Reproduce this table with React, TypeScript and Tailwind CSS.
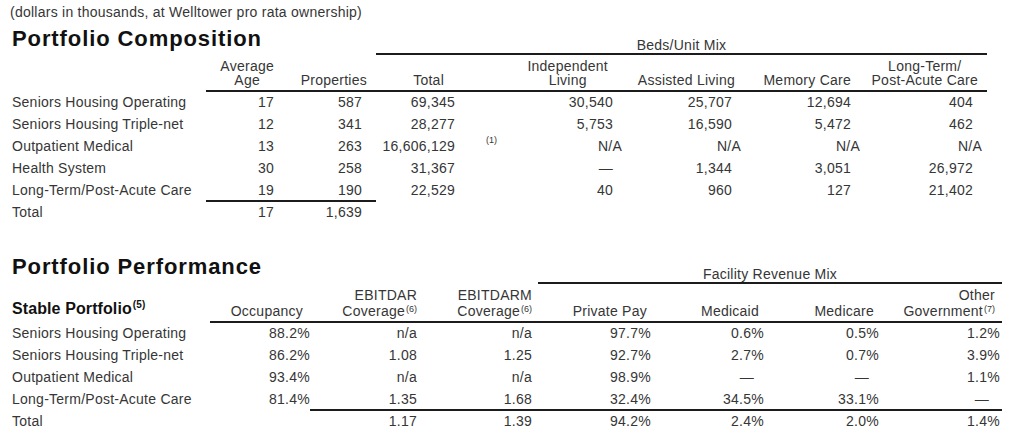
import React from "react";

const comp = [
  ["Seniors Housing Operating", "17", "587", "69,345", "30,540", "25,707", "12,694", "404"],
  ["Seniors Housing Triple-net", "12", "341", "28,277", "5,753", "16,590", "5,472", "462"],
  ["Outpatient Medical", "13", "263", "16,606,129", "N/A", "N/A", "N/A", "N/A"],
  ["Health System", "30", "258", "31,367", "—", "1,344", "3,051", "26,972"],
  ["Long-Term/Post-Acute Care", "19", "190", "22,529", "40", "960", "127", "21,402"],
];

const perf = [
  ["Seniors Housing Operating", "88.2%", "n/a", "n/a", "97.7%", "0.6%", "0.5%", "1.2%"],
  ["Seniors Housing Triple-net", "86.2%", "1.08", "1.25", "92.7%", "2.7%", "0.7%", "3.9%"],
  ["Outpatient Medical", "93.4%", "n/a", "n/a", "98.9%", "—", "—", "1.1%"],
  ["Long-Term/Post-Acute Care", "81.4%", "1.35", "1.68", "32.4%", "34.5%", "33.1%", "—"],
];

const perfPad = ["", "pr-0", "pr-[3px]", "pr-[6px]", "pr-[3px]", "pr-[3px]", "pr-[3px]", "pr-[2px]"];

function Sup({ n }: { n: number }) {
  return <span className="text-[9px] tracking-normal align-[4px] ml-px">({n})</span>;
}

function Composition() {
  return (
    <div className="grid grid-cols-[194px_82px_88px_93px_158px_119px_119px_122px]">
      <div className="col-span-3 pb-[3px] text-[22px] leading-[26px] font-bold tracking-[0.9px] text-[#111]">
        Portfolio Composition
      </div>
      <div className="col-span-5 self-end text-center leading-4 border-b-2 border-[#1c1c1c]">Beds/Unit Mix</div>

      <div />
      {[
        ["pr-[14px]", "Average", "Age"],
        ["pr-[9px]", "", "Properties"],
        ["pr-[25px]", "", "Total"],
        ["pr-[19px]", "Independent", "Living"],
        ["pr-[11px]", "", "Assisted Living"],
        ["pr-[14px]", "", "Memory Care"],
        ["pr-[9px]", "Long-Term/", "Post-Acute Care"],
      ].map(([pad, a, b]) => (
        <div key={b} className={`flex justify-end items-end pt-1 pb-[3px] border-b-2 border-[#1c1c1c] leading-[14px] ${pad}`}>
          <div className="text-center">
            {a && <div>{a}</div>}
            <div>{b}</div>
          </div>
        </div>
      ))}

      {comp.map((r, i) =>
        r.map((c, j) => {
          const last = i === comp.length - 1 && (j === 1 || j === 2);
          if (j === 0) return <div key={`${i}-${j}`} className="h-[22px] leading-5">{c}</div>;
          return (
            <div
              key={`${i}-${j}`}
              className={`relative h-[22px] leading-5 text-right ${c === "N/A" ? "pr-[5px]" : "pr-[14px]"} ${last ? "border-b-2 border-[#1c1c1c]" : ""}`}
            >
              {c}
              {c === "16,606,129" && (
                <span className="absolute left-[110px] top-[-1px] text-[9px] tracking-normal leading-[10px]">(1)</span>
              )}
            </div>
          );
        })
      )}
      <div className="h-[22px] leading-5">Total</div>
      <div className="h-[22px] leading-5 text-right pr-[14px]">17</div>
      <div className="h-[22px] leading-5 text-right pr-[14px]">1,639</div>
    </div>
  );
}

function Performance() {
  return (
    <div className="grid grid-cols-[198px_100px_110px_118px_116px_113px_115px_120px]">
      <div className="col-span-4 pb-1 text-[22px] leading-[26px] font-bold tracking-[0.9px] text-[#111]">
        Portfolio Performance
      </div>
      <div className="col-span-4 self-end text-center leading-4 border-b-2 border-[#1c1c1c]">Facility Revenue Mix</div>

      <div className="self-end pb-[5px] text-[16px] leading-[18px] font-bold tracking-[0.1px] text-[#111]">
        Stable Portfolio<span className="text-[10px] align-[6px] ml-px">(5)</span>
      </div>
      <div className="flex justify-end items-end pt-1 pb-[3px] pr-[7px] border-b-2 border-[#1c1c1c] leading-[14px]">Occupancy</div>
      <div className="flex justify-end items-end pt-1 pb-[3px] pr-[3px] border-b-2 border-[#1c1c1c] leading-[14px]">
        <div className="text-right">
          <div>EBITDAR</div>
          <div>
            Coverage<Sup n={6} />
          </div>
        </div>
      </div>
      <div className="flex justify-end items-end pt-1 pb-[3px] pr-[6px] border-b-2 border-[#1c1c1c] leading-[14px]">
        <div className="text-right">
          <div>EBITDARM</div>
          <div>
            Coverage<Sup n={6} />
          </div>
        </div>
      </div>
      <div className="flex justify-end items-end pt-1 pb-[3px] pr-[7px] border-b-2 border-[#1c1c1c] leading-[14px]">Private Pay</div>
      <div className="flex justify-end items-end pt-1 pb-[3px] pr-[8px] border-b-2 border-[#1c1c1c] leading-[14px]">Medicaid</div>
      <div className="flex justify-end items-end pt-1 pb-[3px] pr-[8px] border-b-2 border-[#1c1c1c] leading-[14px]">Medicare</div>
      <div className="flex justify-end items-end pt-1 pb-[3px] pr-[7px] border-b-2 border-[#1c1c1c] leading-[14px]">
        <div className="text-right">
          <div>Other</div>
          <div>
            Government<Sup n={7} />
          </div>
        </div>
      </div>

      {perf.map((r, i) =>
        r.map((c, j) => {
          const last = i === perf.length - 1 && j >= 2;
          if (j === 0) return <div key={`${i}-${j}`} className="h-[22px] leading-5">{c}</div>;
          return (
            <div
              key={`${i}-${j}`}
              className={`h-[22px] leading-5 text-right ${c === "—" ? "pr-[13px]" : perfPad[j]} ${last ? "border-b-2 border-[#1c1c1c]" : ""}`}
            >
              {c}
            </div>
          );
        })
      )}
      {["Total", "", "1.17", "1.39", "94.2%", "2.4%", "2.0%", "1.4%"].map((c, j) => (
        <div key={j} className={`h-[22px] leading-5 ${j === 0 ? "" : `text-right ${perfPad[j]}`}`}>
          {c}
        </div>
      ))}
    </div>
  );
}

export default function App() {
  return (
    <div className="w-[1024px] h-[441px] overflow-hidden bg-white pl-3 pt-1 font-['Liberation_Sans',Arial,sans-serif] text-[14px] tracking-[0.25px] text-[#363636]">
      <div className="-ml-0.5 leading-4">(dollars in thousands, at Welltower pro rata ownership)</div>
      <div className="mt-[6px]">
        <Composition />
      </div>
      <div className="mt-[30px]">
        <Performance />
      </div>
    </div>
  );
}
